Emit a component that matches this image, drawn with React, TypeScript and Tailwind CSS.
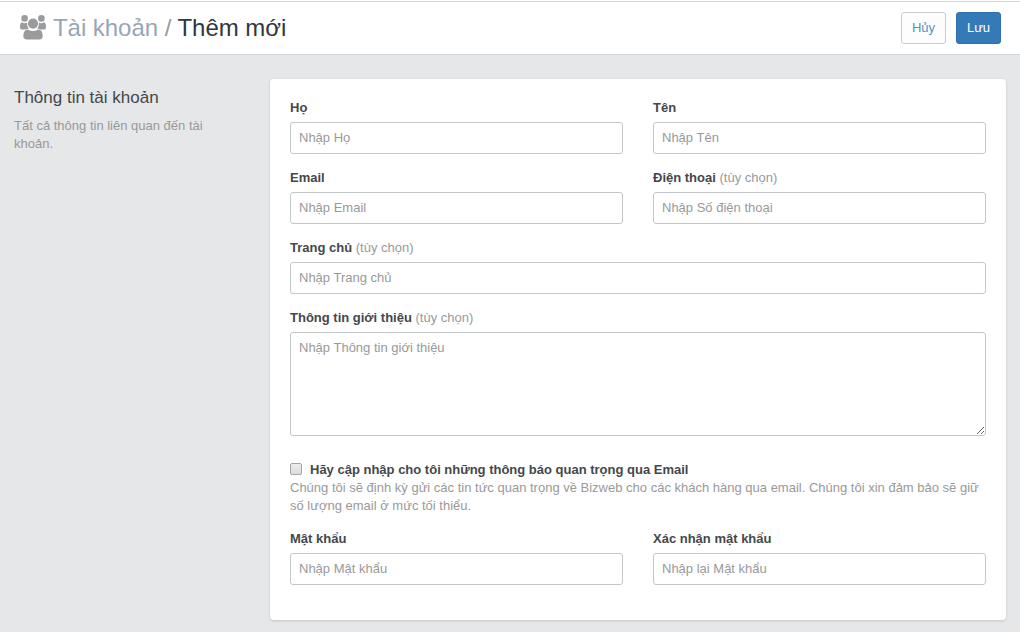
import type { ReactNode } from 'react';

function UsersIcon() {
  return (
    <svg viewBox="0 0 26 25" className="-mt-px h-[25px] w-[26px] shrink-0 fill-[#999b9d]" aria-hidden="true">
      <circle cx="4.6" cy="3.4" r="3.3" />
      <circle cx="21.4" cy="3.4" r="3.3" />
      <circle cx="13" cy="8.6" r="5.1" />
      <path d="M1.6 7.3Q4.6 8.8 7.1 7.6Q6.6 11 8.8 13.4Q6.8 13.6 5.4 14.6H2.2Q0 14.6 0 12.4Q0 8.2 1.6 7.3Z" />
      <path d="M24.4 7.3Q21.4 8.8 18.9 7.6Q19.4 11 17.2 13.4Q19.2 13.6 20.6 14.6H23.8Q26 14.6 26 12.4Q26 8.2 24.4 7.3Z" />
      <path d="M7.8 14.4Q13 17.4 18.2 14.4Q22.7 14.4 22.7 21Q22.7 24.4 19.2 24.4H6.8Q3.3 24.4 3.3 21Q3.3 14.4 7.8 14.4Z" />
    </svg>
  );
}

function Label({ id, children, optional }: { id: string; children: ReactNode; optional?: boolean }) {
  return (
    <label htmlFor={id} className="mb-[5px] block h-[18px] whitespace-nowrap leading-[18px]">
      <span className="font-bold text-[#45474b]">{children}</span>
      {optional && <span className="text-[#999]"> (tùy chọn)</span>}
    </label>
  );
}

const box = 'block w-full rounded-[3px] border border-[#c4c7ca] bg-white px-2 text-[#555] outline-none placeholder:text-[#999] placeholder:opacity-100';

function Field({ id, label, placeholder, optional, type = 'text' }: {
  id: string;
  label: string;
  placeholder: string;
  optional?: boolean;
  type?: string;
}) {
  return (
    <div className="min-w-0">
      <Label id={id} optional={optional}>{label}</Label>
      <input id={id} type={type} placeholder={placeholder} className={box + ' h-8 pb-px'} />
    </div>
  );
}

export default function App() {
  return (
    <div className="h-[632px] overflow-hidden bg-[#e5e7e9] font-['Liberation_Sans',sans-serif] text-[13px] leading-[18px]">
      <div className="h-px bg-white" />
      <header className="flex h-[54px] items-center justify-between border-y border-[#d3d8db] bg-white pl-5 pr-[19px]">
        <div className="flex items-center">
          <UsersIcon />
          <h1 className="ml-[7px] whitespace-nowrap text-2xl leading-8 tracking-[-0.04px] text-[#31373d]">
            <a className="text-[#95a7b7]">Tài khoản</a>
            <span className="text-[#999]"> / </span>
            Thêm mới
          </h1>
        </div>
        <div className="flex gap-2.5">
          <button className="h-8 w-[45px] rounded-[3px] border border-[#c8cdd2] bg-[#fdfdfe] text-[#4f94c4]">Hủy</button>
          <button className="h-8 w-[45px] rounded-[3px] border border-[#2e6fae] bg-[#337ab7] font-medium text-white">Lưu</button>
        </div>
      </header>

      <main className="flex pl-3.5 pr-3.5 pt-6">
        <aside className="w-64 shrink-0 pt-2">
          <h2 className="pt-px text-[17px] leading-5 text-[#43474b]">Thông tin tài khoản</h2>
          <p className="mt-[9px] w-[200px] text-[#999]">Tất cả thông tin liên quan đến tài khoản.</p>
        </aside>

        <form className="h-[541px] flex-1 rounded bg-white px-5 pt-5 shadow-[0_1px_3px_rgba(0,0,0,0.15)]">
          <div className="grid grid-cols-2 gap-x-[30px] gap-y-[15px]">
            <Field id="ho" label="Họ" placeholder="Nhập Họ" />
            <Field id="ten" label="Tên" placeholder="Nhập Tên" />
            <Field id="email" label="Email" placeholder="Nhập Email" />
            <Field id="phone" label="Điện thoại" placeholder="Nhập Số điện thoại" optional />
            <div className="col-span-2">
              <Field id="home" label="Trang chủ" placeholder="Nhập Trang chủ" optional />
            </div>
            <div className="col-span-2">
              <Label id="bio" optional>Thông tin giới thiệu</Label>
              <textarea id="bio" placeholder="Nhập Thông tin giới thiệu" className={box + ' h-[104px] resize-y py-1.5 leading-[18px]'} />
            </div>
          </div>

          <div className="mt-[25px]">
            <label className="flex h-[18px] items-center gap-2">
              <input type="checkbox" className="-mt-0.5 size-3 appearance-none rounded-[2px] border border-[#a5a5a5] bg-linear-to-b from-[#eeeeee] to-[#dcdcdc]" />
              <span className="whitespace-nowrap font-bold text-[#45474b]">Hãy cập nhập cho tôi những thông báo quan trọng qua Email</span>
            </label>
            <p className="text-[#999]">
              Chúng tôi sẽ định kỳ gửi các tin tức quan trọng về Bizweb cho các khách hàng qua email. Chúng tôi xin đảm bảo sẽ giữ số lượng email ở mức tối thiểu.
            </p>
          </div>

          <div className="mt-[15px] grid grid-cols-2 gap-x-[30px]">
            <Field id="password" type="password" label="Mật khẩu" placeholder="Nhập Mật khẩu" />
            <Field id="confirm" type="password" label="Xác nhận mật khẩu" placeholder="Nhập lại Mật khẩu" />
          </div>
        </form>
      </main>
    </div>
  );
}
